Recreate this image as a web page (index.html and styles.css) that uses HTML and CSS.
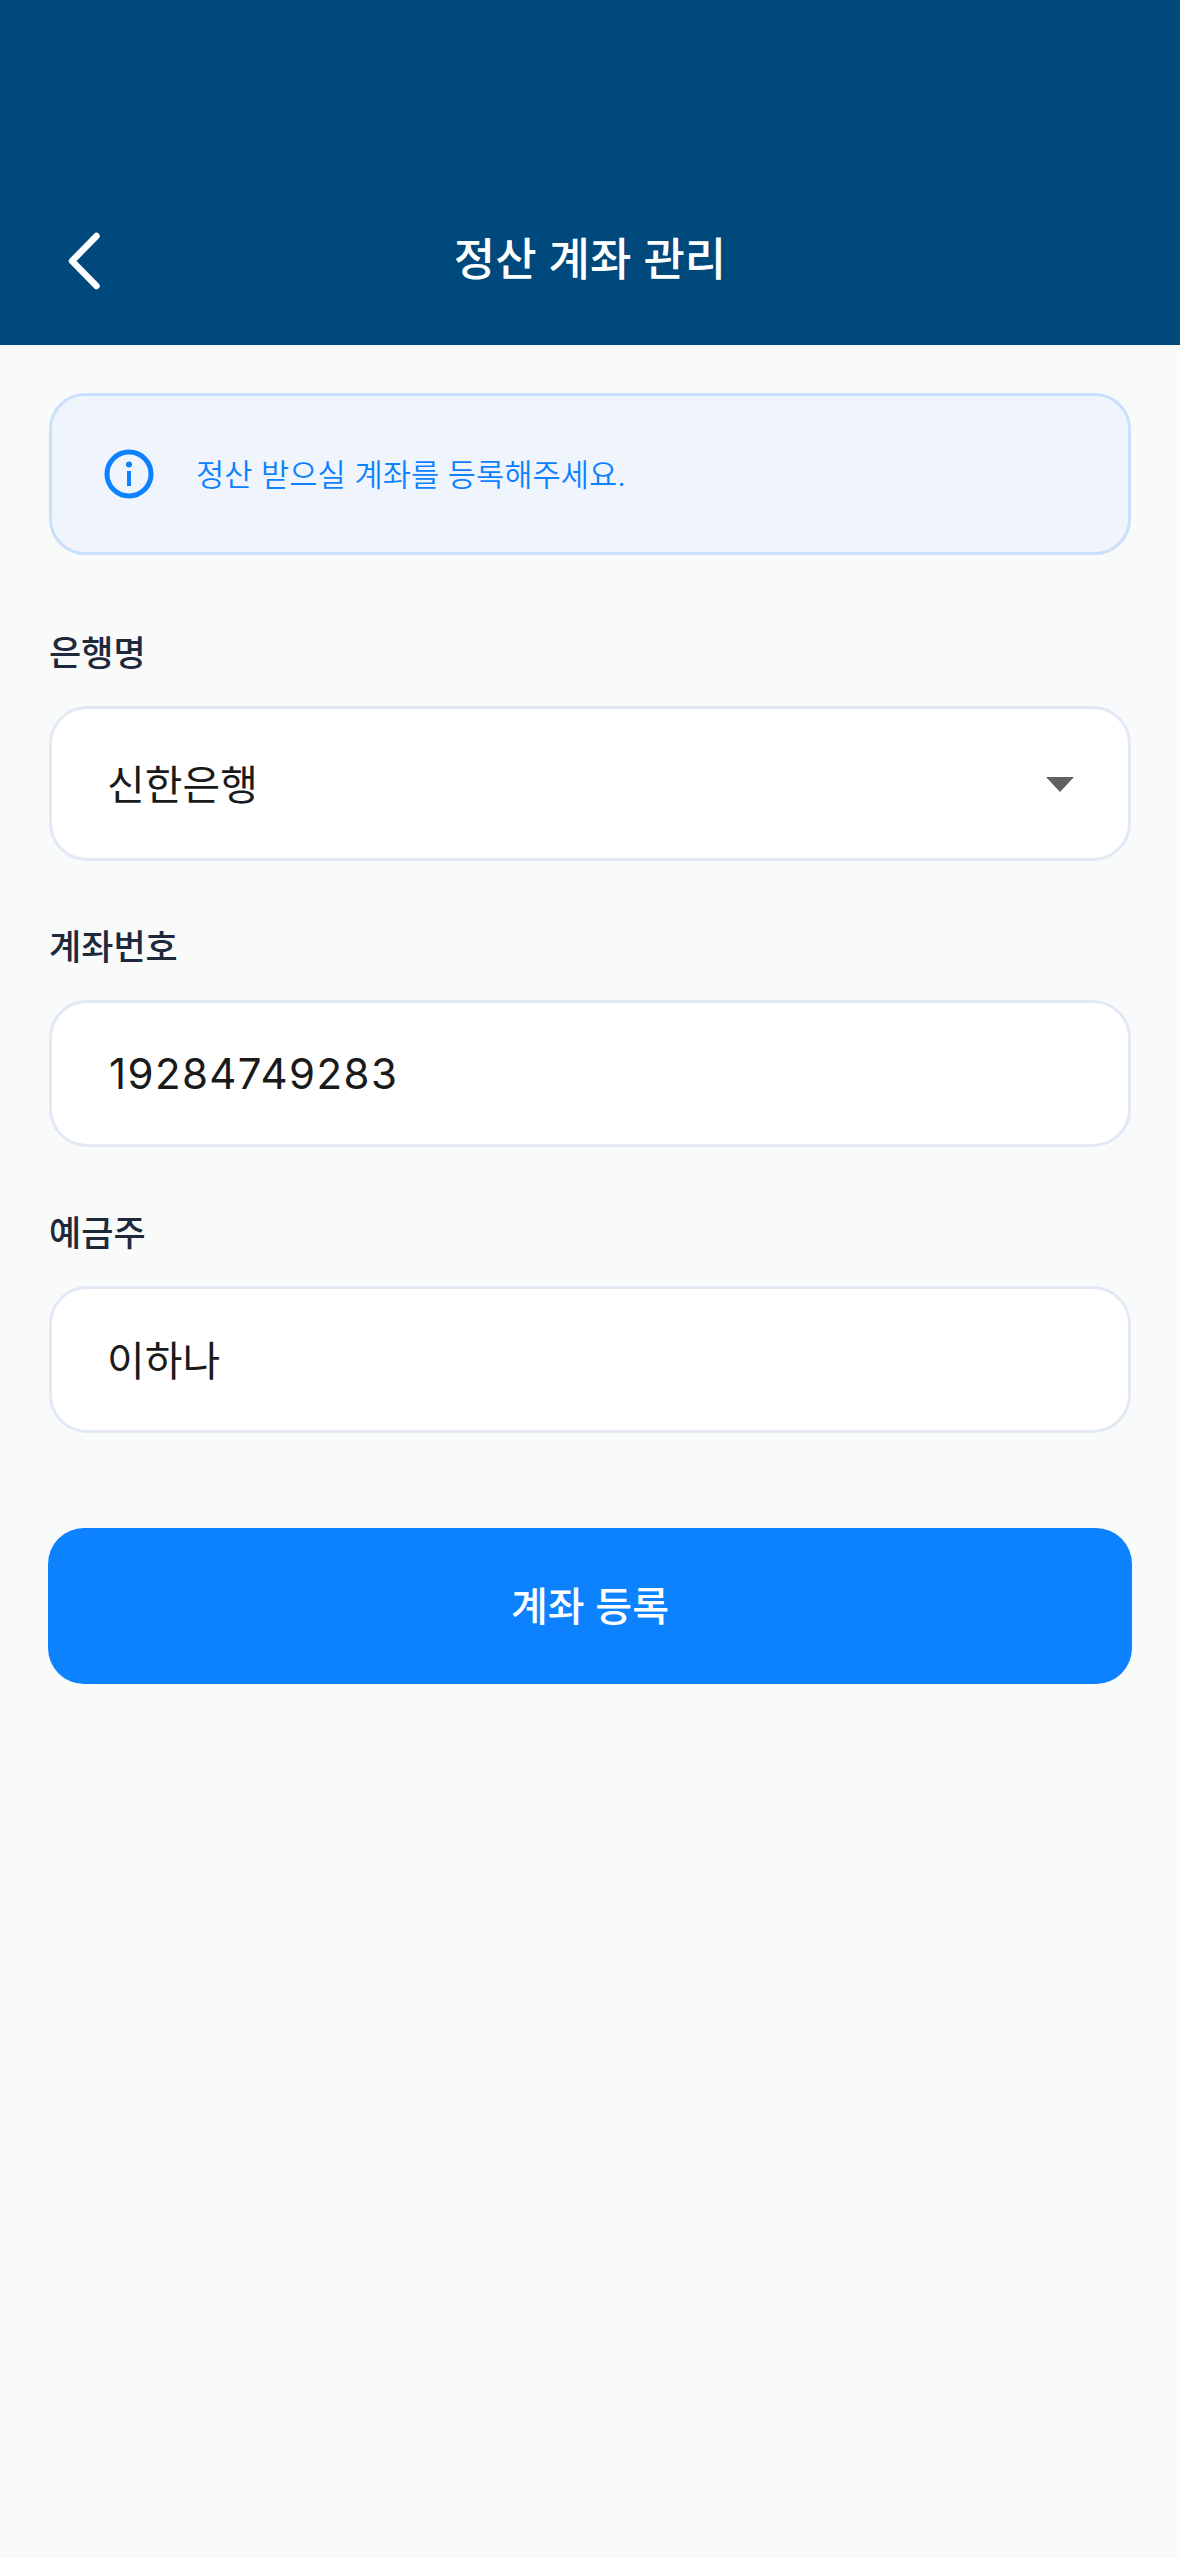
FILE: index.html
```html
<!doctype html>
<html lang="ko">
  <head>
    <meta charset="UTF-8" />
    <title>정산 계좌 관리</title>
    <link rel="stylesheet" href="styles.css">
  </head>

  <body>
    <div class="header">
      <svg class="back" width="34" height="60" viewBox="0 0 34 60">
        <path d="M29.5 5 L5 30 L29.5 55" fill="none" stroke="#fff" stroke-width="6.5" stroke-linecap="round" stroke-linejoin="round" />
      </svg>
      <h1 class="title">정산 계좌 관리</h1>
    </div>

    <div class="content">
      <div class="notice">
        <svg class="notice_icon" width="50" height="50" viewBox="0 0 50 50">
          <circle cx="25" cy="25" r="22" fill="none" stroke="#0d82ff" stroke-width="5" />
          <circle cx="25" cy="15.5" r="3" fill="#0d82ff" />
          <rect x="23" y="22" width="4" height="15" fill="#0d82ff" />
        </svg>
        <p class="notice_text">정산 받으실 계좌를 등록해주세요.</p>
      </div>

      <div class="label first">은행명</div>
      <div class="field select">
        <span>신한은행</span>
        <span class="arrow"></span>
      </div>

      <div class="label">계좌번호</div>
      <div class="field number">19284749283</div>

      <div class="label">예금주</div>
      <div class="field">이하나</div>

      <button class="submit">계좌 등록</button>
    </div>
  </body>
</html>
```

FILE: styles.css
```css
* {
  box-sizing: border-box;
}

html,
body {
  margin: 0;
  height: 100%;
}

body {
  background-color: #f9fbfb;
  font-family: Inter, "Noto Sans CJK KR", sans-serif;
}

.header {
  display: flex;
  align-items: center;
  height: 345px;
  padding: 177px 0 0 67px;
  background-color: #00497c;
}

.back {
  flex: none;
}

.title {
  flex: 1;
  margin: 0 101px 10px 0;
  color: white;
  font-size: 45px;
  font-weight: 500;
  text-align: center;
}

.content {
  padding: 48px 49px 0;
}

.notice {
  display: flex;
  align-items: center;
  height: 162px;
  padding-left: 52px;
  border: 3px solid #c9dffb;
  border-radius: 36px;
  background-color: #f0f5fd;
}

.notice_text {
  margin: 0 0 4px 42px;
  color: #0d82ff;
  font-size: 30.7px;
  font-weight: 350;
}

.label {
  margin: 63px 0 30px;
  color: #1e293b;
  font-size: 35px;
  font-weight: 500;
  line-height: 46px;
}

.label.first {
  margin-top: 75px;
}

.field {
  display: flex;
  align-items: center;
  height: 147px;
  padding: 0 56px 3px 55px;
  border: 3px solid #e2e8f4;
  border-radius: 38px;
  background-color: white;
  color: #1a1a1a;
  font-size: 41px;
}

.number {
  padding: 0 56px 0 57px;
  font-size: 42px;
  font-weight: 370;
  letter-spacing: 1.4px;
}

.select {
  justify-content: space-between;
  height: 155px;
}

.arrow {
  margin: 5px -2px 0 0;
  border-top: 15px solid #616161;
  border-left: 14px solid transparent;
  border-right: 14px solid transparent;
}

.submit {
  display: block;
  width: calc(100% + 2px);
  height: 156px;
  margin: 95px -1px 0;
  padding-bottom: 5px;
  border: none;
  border-radius: 36px;
  background-color: #0d82ff;
  color: white;
  font-family: inherit;
  font-size: 40px;
  font-weight: 500;
}
```
